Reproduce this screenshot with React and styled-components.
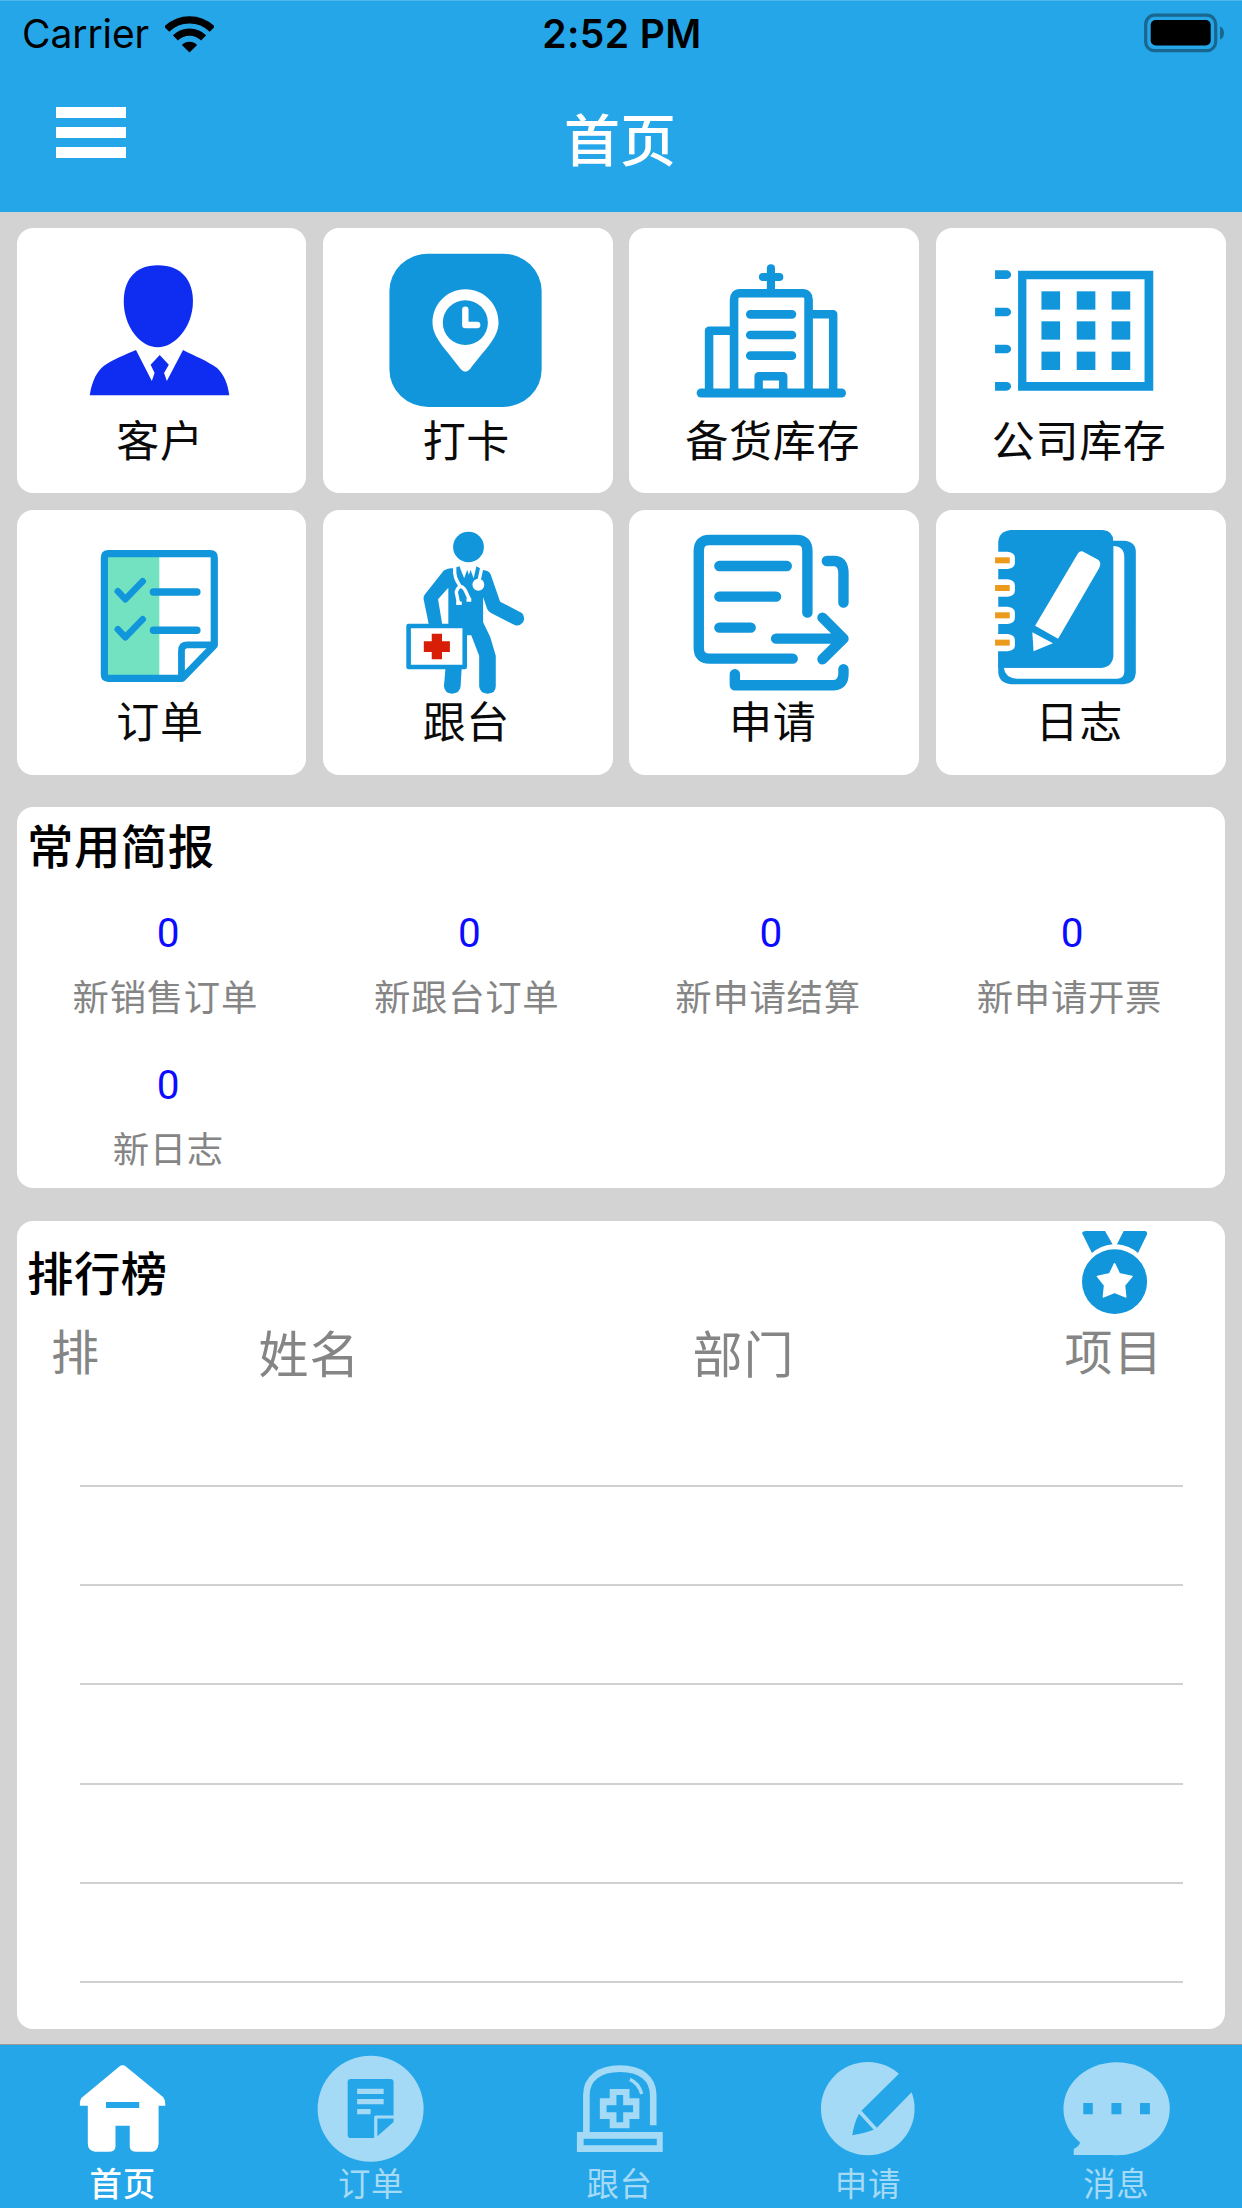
import React from 'react';
import styled, { createGlobalStyle } from 'styled-components';

const BLUE = '#1296db';
const BAR = '#25a6e8';
const PALE = '#a4daf6';

const GlobalStyle = createGlobalStyle`
  * { box-sizing: border-box; }
  body {
    margin: 0;
    background: #d3d3d3;
    font-family: "Noto Sans CJK SC", sans-serif;
  }
`;

const Screen = styled.div`
  width: 1242px;
  height: 2208px;
  display: flex;
  flex-direction: column;
  background: #d3d3d3;
  overflow: hidden;
`;

const Header = styled.header`
  height: 212px;
  flex: none;
  background: ${BAR};
  box-shadow: inset 0 1px 0 #4fb7ec;
`;

const StatusBar = styled.div`
  height: 66px;
  display: grid;
  grid-template-columns: 1fr auto 1fr;
  align-items: center;
  padding: 0 18px 0 22px;
  font-family: Inter, "Noto Sans", sans-serif;
  color: #000;
  line-height: 66px;
`;

const Carrier = styled.div`
  display: flex;
  align-items: center;
  gap: 16px;
  height: 66px;
  font-size: 39px;
  letter-spacing: -0.1px;
  padding-top: 1px;
`;

const Clock = styled.div`
  font-size: 39px;
  font-weight: 600;
  letter-spacing: 0.4px;
  padding: 1px 2px 0 0;
`;

const BatteryWrap = styled.div`
  display: flex;
  justify-content: flex-end;
  padding-bottom: 2px;
`;

const NavBar = styled.div`
  height: 146px;
  display: grid;
  grid-template-columns: 200px 1fr 200px;
  padding: 0 56px;
`;

const MenuButton = styled.button`
  width: 70px;
  height: 51px;
  margin-top: 41px;
  padding: 0;
  border: 0;
  background: none;
  display: flex;
  flex-direction: column;
  justify-content: space-between;
`;

const MenuLine = styled.span`
  height: 10.6px;
  width: 100%;
  background: #fff;
`;

const NavTitle = styled.h1`
  margin: 36px 0 0;
  text-align: center;
  color: #fff;
  font-size: 56px;
  font-weight: 500;
  line-height: 70px;
  text-indent: -2px;
`;

const Content = styled.main`
  flex: none;
  height: 1833px;
  padding: 16.4px 16.6px 0;
`;

const Tiles = styled.section`
  display: grid;
  grid-template-columns: repeat(4, 289.8px);
  grid-auto-rows: 265px;
  column-gap: 16.6px;
  row-gap: 16.4px;
`;

const Tile = styled.div`
  background: #fff;
  border-radius: 16px;
  display: flex;
  flex-direction: column;
  align-items: stretch;
`;

const TileArt = styled.svg`
  width: 289.8px;
  height: 184.3px;
  display: block;
  overflow: visible;
`;

const TileLabel = styled.div`
  font-size: 43px;
  letter-spacing: 0.7px;
  line-height: 50px;
  text-align: center;
  text-indent: -3px;
  color: #0a0a0a;
`;

const Card = styled.section`
  background: #fff;
  border-radius: 16px;
  height: ${(p) => p.$height}px;
  margin-top: ${(p) => p.$gap}px;
`;

const CardTitle = styled.h2`
  margin: 0;
  padding: ${(p) => p.$top}px 0 0 10.5px;
  font-size: 46.4px;
  letter-spacing: 0.5px;
  line-height: 50px;
  font-weight: 500;
  color: #000;
`;

const Metrics = styled.div`
  display: grid;
  grid-template-columns: repeat(4, 301.4px);
  grid-auto-rows: 152.3px;
  margin-top: 38px;
`;

const Metric = styled.div`
  text-align: center;
`;

const MetricValue = styled.div`
  padding: 1.5px 0 0 1.5px;
  font-family: Roboto, sans-serif;
  font-size: 40.5px;
  line-height: 48px;
  color: #0b0bff;
`;

const MetricLabel = styled.div`
  margin-top: 16.2px;
  font-size: 36.4px;
  letter-spacing: 0.7px;
  line-height: 44px;
  color: #858585;
  text-indent: ${(p) => (p.$long ? -4 : 2)}px;
`;

const RankHead = styled.div`
  height: 99px;
  display: flex;
  justify-content: space-between;
  padding-right: 78px;
`;

const MedalArt = styled.svg`
  width: 65.5px;
  height: 83px;
  margin-top: 10px;
  overflow: visible;
`;

const Columns = styled.div`
  height: 67px;
  display: grid;
  grid-template-columns: 207.5px 434px 372px auto;
  padding-left: 34.5px;
`;

const Column = styled.div`
  font-size: ${(p) => (p.$wide ? 50 : 48)}px;
  letter-spacing: ${(p) => (p.$wide ? 1 : 1.4)}px;
  line-height: 56px;
  padding-top: ${(p) => (p.$wide ? 2.9 : 0.5)}px;
  color: #858585;
`;

const RankRow = styled.div`
  height: 99.3px;
  margin: 0 42.5px 0 63px;
  border-bottom: 2px solid #d0d0d0;
`;

const TabBar = styled.nav`
  height: 163px;
  flex: none;
  display: grid;
  grid-template-columns: repeat(5, 1fr);
  background: ${BAR};
  box-shadow: 0 -1px 0 #9b9b9b;
`;

const Tab = styled.div`
  display: flex;
  flex-direction: column;
`;

const TabArt = styled.svg`
  width: 248.4px;
  height: 114px;
  display: block;
  overflow: visible;
`;

const TabLabel = styled.div`
  font-size: 32.4px;
  letter-spacing: 0.7px;
  font-weight: ${(p) => (p.$active ? 500 : 400)};
  line-height: 45px;
  text-align: center;
  text-indent: -3px;
  color: ${(p) => (p.$active ? '#fff' : PALE)};
`;

const Line = ({ d, w, c = BLUE, cap = 'butt' }) => (
  <path
    d={d}
    fill="none"
    stroke={c}
    strokeWidth={w}
    strokeLinecap={cap}
    strokeLinejoin="round"
    vectorEffect="non-scaling-stroke"
  />
);

const art = {
  customer: {
    box: '42 25 733 553',
    body: (
      <g fill="#0f2df0">
        <path d="M398 137C460 137 487 185 487 245C487 320 443 383 398 383C352 383 312 320 312 245C312 185 338 137 398 137Z" />
        <path d="M226 527C232 480 245 455 262 438C285 420 315 405 343 391L383 484L390 460L380 435L403 406L426 435L414 460L421 484L462 391C490 408 525 425 548 445C565 465 575 490 579 527Z" />
      </g>
    ),
  },
  clock: {
    box: '817 25 733 553',
    body: (
      <g>
        <rect x="985" y="102" width="385" height="460" rx="98" ry="112" fill={BLUE} />
        <path d="M1177 209C1225 209 1261 255 1261 309C1261 355 1225 390 1189 448Q1177 464 1165 448C1130 390 1094 355 1094 309C1094 255 1130 209 1177 209Z" fill="#fff" />
        <ellipse cx="1177" cy="309" rx="57" ry="67" fill={BLUE} />
        <Line d="M1177 270V316H1207" w={6.4} c="#fff" cap="round" />
      </g>
    ),
  },
  hospital: {
    box: '24 25 731 553',
    body: (
      <g>
        <Line d="M206 520H560" w={9} cap="round" />
        <Line d="M289 520V240Q289 221 304 221H462Q477 221 477 240V520" w={8.6} />
        <Line d="M226 520V333H289M477 284H539V520" w={8.5} />
        <Line d="M330 284H435M330 346H435M330 408H435" w={8.7} cap="round" />
        <Line d="M351 520V470H413V520" w={8.4} />
        <Line d="M382 146V215M362 172H403" w={8.2} cap="round" />
      </g>
    ),
  },
  company: {
    box: '796 25 731 553',
    body: (
      <g fill={BLUE}>
        <path fillRule="evenodd" d="M1003 153H1344V513H1003ZM1024 179V487H1322V179Z" />
        {[215, 305, 396].map((y) =>
          [1062, 1151, 1239].map((x) => <rect key={`${x}-${y}`} x={x} y={y} width="47" height="55" />)
        )}
        {[152, 264, 375, 487].map((y) => (
          <path key={y} d={`M945 ${y}h28a12.5 13 0 0 1 0 26h-28z`} />
        ))}
      </g>
    ),
  },
  order: {
    box: '42 29 733 553',
    body: (
      <g>
        <rect x="268" y="165" width="134" height="362" fill="#72e2c0" />
        <Line d="M460 534H273Q263 534 263 522V172Q263 160 273 160H531Q541 160 541 172V435Z" w={7.2} />
        <Line d="M458 534V452Q458 434 473 434H541" w={6.8} />
        <Line d="M297 273L316 297L360 243M297 387L316 411L360 357" w={6.6} cap="round" />
        <Line d="M387 275H497M387 390H497" w={7.4} cap="round" />
      </g>
    ),
  },
  doctor: {
    box: '817 29 733 553',
    body: (
      <g>
        <g fill={BLUE}>
          <ellipse cx="1185" cy="140" rx="39" ry="46" />
          <path d="M1146 204C1132 204 1125 208 1120 214L1074 283Q1070 290 1072 300L1085 375H1119L1108 297L1134 262V375H1180V405H1192L1212 466V558Q1214 580 1233 580Q1254 580 1254 558V466L1240 410L1222 366V290L1232 325Q1235 333 1242 338L1303 375Q1315 378 1323 366Q1330 350 1320 338L1265 304L1241 222Q1236 210 1222 209L1205 198L1198 234L1190 208L1186 224L1182 208L1174 234L1162 198Z" />
          <path d="M1127 500L1123 558Q1125 580 1143 580Q1163 580 1165 558L1168 500Z" />
        </g>
        <ellipse cx="1210" cy="253" rx="15" ry="18" fill="#fff" />
        <Line d="M1219 200L1211 245M1150 200C1148 235 1158 245 1166 262M1160 310L1154 275Q1162 246 1176 268L1188 298" w={3.4} c="#fff" />
        <Line d="M1154 309H1168M1180 299H1192" w={3.6} c="#fff" />
        <rect x="1033.500" y="377" width="142" height="123" fill="#fff" />
        <Line d="M1033.500 377H1175.500V500H1033.500Z" w={4.6} />
        <path d="M1092 400H1118V423H1138V455H1118V477H1092V455H1072V423H1092Z" fill="#d81e06" />
      </g>
    ),
  },
  apply: {
    box: '24 29 731 553',
    body: (
      <g>
        <Line d="M474 337V152Q474 119 447 119H227Q200 119 200 152V442Q200 475 227 475H437" w={10.4} cap="round" />
        <Line d="M252 197H422M252 289H395M252 382H331" w={10.4} cap="round" />
        <Line d="M523 182H543Q565 184 565 220V307M291 522V555H540Q565 552 565 520V507" w={10.4} cap="round" />
        <Line d="M395 415H562M512 352L565 415L512 477" w={10.4} cap="round" />
      </g>
    ),
  },
  journal: {
    box: '796 29 731 553',
    body: (
      <g>
        <path d="M1200 121H1270Q1300 123 1300 155V518Q1298 549 1270 552H985Q955 549 953 516V400Z" fill={BLUE} />
        <path d="M967 502H1213Q1240 500 1243 470V137Q1271 137 1271 172V515Q1270 535 1252 535H1000Q970 532 967 502Z" fill="#fff" />
        <path d="M985 89H1217Q1243 92 1243 122V468Q1240 500 1213 502H953V125Q955 92 985 89Z" fill={BLUE} />
        {[180, 263, 345, 427].map((y) => (
          <g key={y}>
            <path d={`M942 ${y - 26}h35q18 3 18 18v16q0 15-18 18h-35z`} fill="#fff" />
            <rect x="945" y={y - 9} width="37" height="18" fill="#eb9a1c" />
          </g>
        ))}
        <path d="M1165 153L1205 178Q1214 187 1208 202L1104 415L1046 376L1152 163Q1157 152 1165 153ZM1039 396L1091 429L1042 453Z" fill="#fff" />
      </g>
    ),
  },
};

const tiles = [
  ['customer', '客户'],
  ['clock', '打卡'],
  ['hospital', '备货库存'],
  ['company', '公司库存'],
  ['order', '订单'],
  ['doctor', '跟台'],
  ['apply', '申请'],
  ['journal', '日志'],
];

const metrics = ['新销售订单', '新跟台订单', '新申请结算', '新申请开票', '新日志'];

const tabs = [
  {
    label: '首页',
    box: '0 255 628 342',
    body: (
      <g>
        <path d="M301 320Q310 312 319 320L413 412Q420 425 418 437H401V550Q399 575 385 575H345Q329 575 328 560V497H292V560Q291 575 275 575H240Q222 573 222 550V437H202Q201 425 205 415Z" fill="#fff" />
        <rect x="268" y="426" width="84" height="18" fill={BAR} />
      </g>
    ),
  },
  {
    label: '订单',
    box: '628 255 628 342',
    body: (
      <g fill={PALE}>
        <ellipse cx="938" cy="446" rx="134" ry="159" />
        <path d="M888 357H988Q996 357 996 367V486L950 534H888Q880 534 880 524V367Q880 357 888 357Z" fill={BAR} />
        <path d="M904 386H971V402H904ZM904 417H971V433H904ZM904 447H938V463H904Z" />
        <Line d="M951 536V471H997" w={3.2} c={PALE} />
      </g>
    ),
  },
  {
    label: '跟台',
    box: '1256 255 628 342',
    body: (
      <g fill={PALE}>
        <Line d="M1482 520V405C1482 355 1515 326 1567 326S1651 355 1651 405V496" w={6.6} c={PALE} />
        <path fillRule="evenodd" d="M1458 516H1675V576H1458ZM1475 536V556H1660V536Z" />
        <path d="M1541 387H1591V415H1616V477H1591V505H1541V477H1516V415H1541Z" />
        <path d="M1558 405H1575V436H1600V457H1575V487H1558V457H1533V436H1558Z" fill={BAR} />
        <Line d="M1592 358Q1615 370 1622 402" w={3.4} c={PALE} />
      </g>
    ),
  },
  {
    label: '申请',
    box: '315.600 255 626 342',
    body: (
      <g>
        <ellipse cx="625" cy="446" rx="118" ry="140" fill={PALE} />
        <path d="M715 325L703 342L609 452L648 503L733 400L765 370ZM603 461L640 509Q620 518 586 526Q590 490 603 461Z" fill={BAR} />
      </g>
    ),
  },
  {
    label: '消息',
    box: '942 255 626 342',
    body: (
      <g>
        <ellipse cx="1251" cy="446" rx="134" ry="139.500" fill={PALE} />
        <path d="M1143 585V567Q1162 556 1158 540L1270 520V585Z" fill={PALE} />
        <path d="M1167 429H1191V463H1167ZM1238 429H1263V463H1238ZM1310 429H1335V463H1310Z" fill={BAR} />
      </g>
    ),
  },
];

function WifiIcon() {
  return (
    <svg width="49" height="37" viewBox="0 0 49 37">
      <g fill="none" stroke="#000" strokeWidth="7.2">
        <path d="M1.700 13.200A32.300 32.300 0 0 1 47.300 13.200" />
        <path d="M10.400 21.900A20 20 0 0 1 38.600 21.900" />
      </g>
      <path d="M24.500 36.500L16.900 28.900A10.800 10.800 0 0 1 32.100 28.900Z" />
    </svg>
  );
}

function BatteryIcon() {
  return (
    <svg width="80" height="40" viewBox="0 0 80 40">
      <rect x="1.700" y="2.200" width="70" height="35.500" rx="9" fill="none" stroke="#19668f" strokeWidth="3.200" />
      <rect x="6.700" y="7" width="60" height="25.500" rx="5" />
      <path d="M76 13.500Q80 15 80 20T76 26.500Z" fill="#19668f" />
    </svg>
  );
}

export default function App() {
  return (
    <Screen>
      <GlobalStyle />
      <Header>
        <StatusBar>
          <Carrier>
            <span>Carrier</span>
            <WifiIcon />
          </Carrier>
          <Clock>2:52 PM</Clock>
          <BatteryWrap>
            <BatteryIcon />
          </BatteryWrap>
        </StatusBar>
        <NavBar>
          <MenuButton>
            <MenuLine />
            <MenuLine />
            <MenuLine />
          </MenuButton>
          <NavTitle>首页</NavTitle>
        </NavBar>
      </Header>

      <Content>
        <Tiles>
          {tiles.map(([name, label]) => (
            <Tile key={name}>
              <TileArt viewBox={art[name].box} preserveAspectRatio="none">
                {art[name].body}
              </TileArt>
              <TileLabel>{label}</TileLabel>
            </Tile>
          ))}
        </Tiles>

        <Card $height={381} $gap={32.6}>
          <CardTitle $top={11.7}>常用简报</CardTitle>
          <Metrics>
            {metrics.map((label) => (
              <Metric key={label}>
                <MetricValue>0</MetricValue>
                <MetricLabel $long={label.length > 3}>{label}</MetricLabel>
              </Metric>
            ))}
          </Metrics>
        </Card>

        <Card $height={808} $gap={33}>
          <RankHead>
            <CardTitle $top={24.5}>排行榜</CardTitle>
            <MedalArt viewBox="1165 64 165 249" preserveAspectRatio="none">
              <path d="M1165 70Q1167 64 1175 64H1223L1242 104Q1212 108 1190 130ZM1270 64H1325Q1330 66 1329 74L1306 130Q1285 108 1253 104Z" fill={BLUE} />
              <ellipse cx="1247" cy="216" rx="82" ry="97" fill={BLUE} />
              <path
                d="M1247 162L1259 192L1291 200L1272 227L1275 262L1247 248L1219 262L1222 227L1204 200L1235 192Z"
                fill="#fff"
                stroke="#fff"
                strokeWidth="4"
                strokeLinejoin="round"
              />
            </MedalArt>
          </RankHead>
          <Columns>
            <Column>排</Column>
            <Column $wide>姓名</Column>
            <Column $wide>部门</Column>
            <Column>项目</Column>
          </Columns>
          {[1, 2, 3, 4, 5, 6].map((n) => (
            <RankRow key={n} />
          ))}
        </Card>
      </Content>

      <TabBar>
        {tabs.map((tab, i) => (
          <Tab key={tab.label}>
            <TabArt viewBox={tab.box} preserveAspectRatio="none">
              {tab.body}
            </TabArt>
            <TabLabel $active={i === 0}>{tab.label}</TabLabel>
          </Tab>
        ))}
      </TabBar>
    </Screen>
  );
}
